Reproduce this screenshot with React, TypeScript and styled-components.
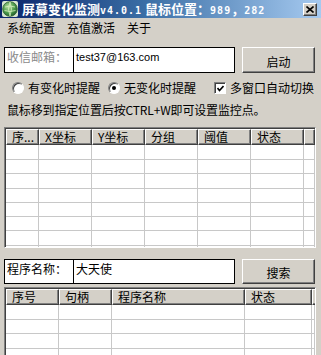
import React from "react";
import styled, { createGlobalStyle } from "styled-components";

const Global = createGlobalStyle`
  html, body { margin: 0; padding: 0; background: #d4d0c8; }
  body { font-family: "Noto Sans CJK SC", "Liberation Sans", sans-serif; }
`;

const Window = styled.div`
  width: 321px;
  height: 355px;
  overflow: hidden;
  background: #d4d0c8;
  display: flex;
  flex-direction: column;
  font-size: 12px;
  color: #000;
  & > * { flex-shrink: 0; }
`;

const TitleBar = styled.div`
  height: 18px;
  width: 321px;
  box-sizing: border-box;
  background: linear-gradient(to right, #0a246a 0%, #3a6ea5 45%, #a6caf0 100%);
  display: flex;
  align-items: center;
  padding-left: 2px;
  padding-right: 4px;
`;

const TitleText = styled.div`
  flex: 1 1 0;
  min-width: 0;
  margin-left: 4px;
  color: #fff;
  font-weight: bold;
  font-size: 13px;
  line-height: 18px;
  height: 18px;
  white-space: nowrap;
`;

const Mono = styled.span`
  font-family: "DejaVu Sans Mono", monospace;
  font-size: 10px;
  letter-spacing: 1px;
`;

const CloseBtn = styled.div`
  width: 14px;
  height: 13px;
  box-sizing: border-box;
  background: #d4d0c8;
  border: 1px solid;
  border-color: #fff #404040 #404040 #fff;
  box-shadow: inset -1px -1px 0 #808080;
  display: flex;
  align-items: center;
  justify-content: center;
  flex-shrink: 0;
  position: relative;
`;

const MenuBar = styled.div`
  height: 20px;
  display: flex;
  align-items: center;
  gap: 12px;
  padding-left: 7px;
`;

const MenuItem = styled.span`
  font-size: 12px;
  line-height: 16px;
`;

const Content = styled.div`
  padding: 0 5px 0 4px;
  display: flex;
  flex-direction: column;
  & > * { flex-shrink: 0; }
`;

const FieldRow = styled.div<{ $top: number }>`
  display: flex;
  align-items: flex-start;
  margin-top: ${(p) => p.$top}px;
`;

const FieldBox = styled.div<{ $h: number }>`
  width: 231px;
  height: ${(p) => p.$h}px;
  box-sizing: border-box;
  border: 1px solid #000;
  display: flex;
  background: #fff;
`;

const LabelCell = styled.div<{ $muted?: boolean }>`
  width: 69px;
  box-sizing: border-box;
  border-right: 1px solid #000;
  background: #fff;
  color: ${(p) => (p.$muted ? "#8a8a8a" : "#000")};
  padding: 1px 0 0 2px;
  font-size: 12px;
  line-height: 16px;
  white-space: nowrap;
`;

const InputCell = styled.div<{ $latin?: boolean }>`
  flex: 1;
  padding: 1px 0 0 2px;
  font-family: ${(p) =>
    p.$latin ? '"Liberation Sans", sans-serif' : '"Noto Sans CJK SC", sans-serif'};
  font-size: ${(p) => (p.$latin ? "11px" : "12px")};
  line-height: 16px;
`;

const Button = styled.div<{ $h: number }>`
  width: 73px;
  height: ${(p) => p.$h}px;
  margin-left: 7px;
  box-sizing: border-box;
  background: #d4d0c8;
  border: 1px solid;
  border-color: #fff #404040 #404040 #fff;
  box-shadow: inset -1px -1px 0 #808080;
  display: flex;
  align-items: center;
  justify-content: center;
  font-size: 12px;
  padding-top: 2px;
`;

const OptionsRow = styled.div`
  display: flex;
  align-items: center;
  height: 14px;
  margin-top: 8px;
  padding-left: 8px;
`;

const Option = styled.label<{ $gap?: number }>`
  display: flex;
  align-items: center;
  margin-right: ${(p) => p.$gap ?? 0}px;
  font-size: 12px;
  line-height: 14px;
  white-space: nowrap;
`;

const Radio = styled.span<{ $on?: boolean }>`
  width: 10px;
  height: 10px;
  border-radius: 50%;
  background: #fff;
  border: 1px solid;
  border-color: #808080 #fff #fff #808080;
  box-shadow: inset 1px 1px 0 #404040;
  margin-right: 4px;
  display: flex;
  align-items: center;
  justify-content: center;
  &::after {
    content: "";
    width: 4px;
    height: 4px;
    border-radius: 50%;
    background: ${(p) => (p.$on ? "#000" : "transparent")};
  }
`;

const Check = styled.span`
  width: 12px;
  height: 12px;
  box-sizing: border-box;
  background: #fff;
  border: 1px solid;
  border-color: #808080 #fff #fff #808080;
  box-shadow: inset 1px 1px 0 #404040;
  margin-right: 4px;
  display: flex;
  align-items: center;
  justify-content: center;
`;

const Hint = styled.div`
  margin-top: 8px;
  padding-left: 3px;
  font-size: 12px;
  line-height: 14px;
  white-space: nowrap;
  letter-spacing: -0.15px;
`;

const Grid = styled.div<{ $top: number; $h: number }>`
  margin-top: ${(p) => p.$top}px;
  height: ${(p) => p.$h}px;
  box-sizing: border-box;
  border: 1px solid;
  border-color: #808080 #fff #fff #808080;
  box-shadow: inset 1px 1px 0 #404040;
  background: #fff;
  overflow: hidden;
  padding: 1px 0 0 1px;
  width: 312px;
`;

const Row = styled.div<{ $cols: string; $h: number }>`
  display: grid;
  grid-template-columns: ${(p) => p.$cols};
  height: ${(p) => p.$h}px;
`;

const HeadCell = styled.div`
  background: #d4d0c8;
  box-sizing: border-box;
  border: 1px solid;
  border-color: #fff #404040 #404040 #fff;
  box-shadow: inset -1px -1px 0 #808080;
  padding-left: 5px;
  font-size: 12px;
  line-height: 14px;
  white-space: nowrap;
`;

const Cell = styled.div`
  box-sizing: border-box;
  border-right: 1px solid #c8c8c8;
  border-bottom: 1px solid #c8c8c8;
`;

const AppIcon = () => (
  <svg width="16" height="16" viewBox="0 0 16 16" style={{ flexShrink: 0 }}>
    <defs>
      <radialGradient id="g" cx="40%" cy="35%" r="70%">
        <stop offset="0%" stopColor="#b8e0a0" />
        <stop offset="60%" stopColor="#4a9a4a" />
        <stop offset="100%" stopColor="#1e5a2a" />
      </radialGradient>
    </defs>
    <rect x="0" y="0" width="16" height="16" fill="#d8e8d0" rx="2" />
    <circle cx="8" cy="8" r="7.3" fill="url(#g)" stroke="#2e5e30" strokeWidth="0.8" />
    <path d="M3 6 Q8 4 13 6 M2.5 9.5 Q8 11.5 13.5 9.5 M8 1 Q5 8 8 15 M8 1 Q11 8 8 15" stroke="#d8f0c0" strokeWidth="0.8" fill="none" />
  </svg>
);

const cols1 = "33px 53px 53px 53px 53px 53px 1fr";
const cols2 = "53px 53px 133px 67px 1fr";
const rowHeights = [15, 14, 15, 14, 14, 14, 15, 14];

function TableGrid({ cols, heads, rows, headH, top, h }: {
  cols: string; heads: string[]; rows: number; headH: number; top: number; h: number;
}) {
  const n = heads.length;
  return (
    <Grid $top={top} $h={h}>
      <Row $cols={cols} $h={headH}>
        {heads.map((t, i) => (
          <HeadCell key={i}>{t}</HeadCell>
        ))}
      </Row>
      {Array.from({ length: rows }).map((_, r) => (
        <Row key={r} $cols={cols} $h={rowHeights[r % rowHeights.length]}>
          {Array.from({ length: n }).map((__, c) => (
            <Cell key={c} />
          ))}
        </Row>
      ))}
    </Grid>
  );
}

export default function App() {
  return (
    <>
      <Global />
      <Window>
        <TitleBar>
          <AppIcon />
          <TitleText>
            屏幕变化监测<Mono>v4.0.1</Mono> 鼠标位置：<Mono>989</Mono>，<Mono>282</Mono>
          </TitleText>
          <CloseBtn>
            <svg width="8" height="7" viewBox="0 0 8 7">
              <path d="M0.5 0.5 L7.5 6.5 M7.5 0.5 L0.5 6.5" stroke="#000" strokeWidth="1.6" />
            </svg>
          </CloseBtn>
        </TitleBar>
        <MenuBar>
          <MenuItem>系统配置</MenuItem>
          <MenuItem>充值激活</MenuItem>
          <MenuItem>关于</MenuItem>
        </MenuBar>
        <Content>
          <FieldRow $top={9}>
            <FieldBox $h={26}>
              <LabelCell $muted>收信邮箱：</LabelCell>
              <InputCell $latin>test37@163.com</InputCell>
            </FieldBox>
            <Button $h={26}>启动</Button>
          </FieldRow>
          <OptionsRow>
            <Option $gap={8}>
              <Radio />
              有变化时提醒
            </Option>
            <Option $gap={18}>
              <Radio $on />
              无变化时提醒
            </Option>
            <Option>
              <Check>
                <svg width="7" height="7" viewBox="0 0 7 7">
                  <path d="M0.5 3 L2.5 5.5 L6.5 1" stroke="#000" strokeWidth="1.6" fill="none" />
                </svg>
              </Check>
              多窗口自动切换
            </Option>
          </OptionsRow>
          <Hint>鼠标移到指定位置后按CTRL+W即可设置监控点。</Hint>
          <TableGrid
            cols={cols1}
            heads={["序...", "X坐标", "Y坐标", "分组", "阈值", "状态", ""]}
            rows={8}
            headH={16}
            top={10}
            h={121}
          />
          <FieldRow $top={11}>
            <FieldBox $h={25}>
              <LabelCell>程序名称：</LabelCell>
              <InputCell>大天使</InputCell>
            </FieldBox>
            <Button $h={25}>搜索</Button>
          </FieldRow>
          <TableGrid
            cols={cols2}
            heads={["序号", "句柄", "程序名称", "状态", ""]}
            rows={5}
            headH={16}
            top={3}
            h={80}
          />
        </Content>
      </Window>
    </>
  );
}
